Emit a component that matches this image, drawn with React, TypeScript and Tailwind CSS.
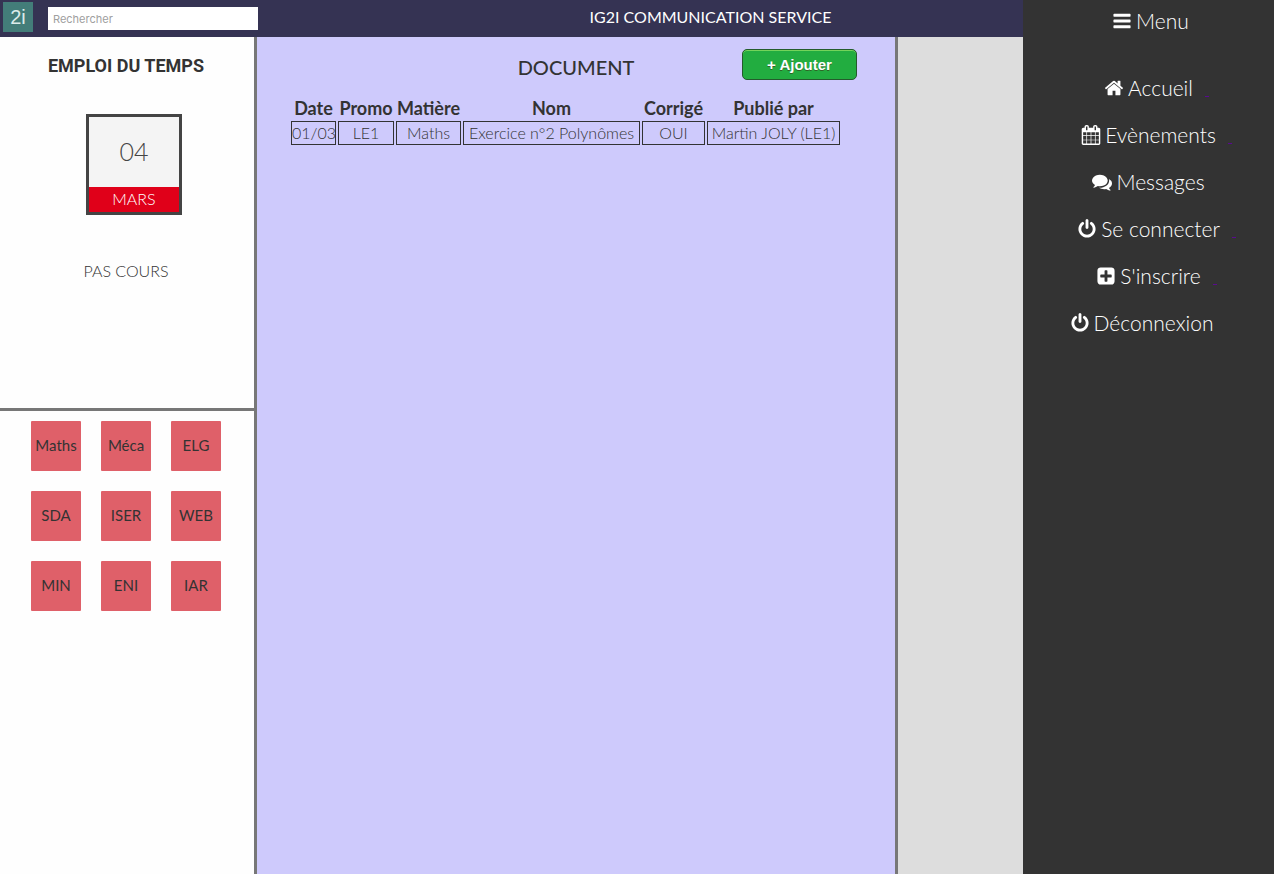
import React from "react";

const icons = {
  bars: "M1664 1344v128q0 26-19 45t-45 19h-1408q-26 0-45-19t-19-45v-128q0-26 19-45t45-19h1408q26 0 45 19t19 45zm0-512v128q0 26-19 45t-45 19h-1408q-26 0-45-19t-19-45v-128q0-26 19-45t45-19h1408q26 0 45 19t19 45zm0-512v128q0 26-19 45t-45 19h-1408q-26 0-45-19t-19-45v-128q0-26 19-45t45-19h1408q26 0 45 19t19 45z",
  home: "M1472 992v480q0 26-19 45t-45 19h-384v-384h-256v384h-384q-26 0-45-19t-19-45v-480q0-1 .5-3t.5-3l575-474 575 474q1 2 1 6zm223-69l-62 74q-8 9-21 11h-3q-13 0-21-7l-692-577-692 577q-12 8-24 7-13-2-21-11l-62-74q-8-10-7-23.5t11-21.5l719-599q32-26 76-26t76 26l244 204v-195q0-14 9-23t23-9h192q14 0 23 9t9 23v408l219 182q10 8 11 21.5t-7 23.5z",
  calendar:
    "M192 1664h288v-288h-288v288zm352 0h320v-288h-320v288zm-352-352h288v-320h-288v320zm352 0h320v-320h-320v320zm-352-384h288v-288h-288v288zm736 736h320v-288h-320v288zm-384-736h320v-288h-320v288zm768 736h288v-288h-288v288zm-384-352h320v-320h-320v320zm-352-864v-288q0-13-9.5-22.5t-22.5-9.5h-64q-13 0-22.5 9.5t-9.5 22.5v288q0 13 9.5 22.5t22.5 9.5h64q13 0 22.5-9.5t9.5-22.5zm736 864h288v-320h-288v320zm-384-384h320v-288h-320v288zm384 0h288v-288h-288v288zm32-480v-288q0-13-9.5-22.5t-22.5-9.5h-64q-13 0-22.5 9.5t-9.5 22.5v288q0 13 9.5 22.5t22.5 9.5h64q13 0 22.5-9.5t9.5-22.5zm384-64v1280q0 52-38 90t-90 38h-1408q-52 0-90-38t-38-90v-1280q0-52 38-90t90-38h128v-96q0-66 47-113t113-47h64q66 0 113 47t47 113v96h384v-96q0-66 47-113t113-47h64q66 0 113 47t47 113v96h128q52 0 90 38t38 90z",
  comments:
    "M1408 768q0 139-94 257t-256.5 186.5-353.5 68.5q-86 0-176-16-124 88-278 128-36 9-86 16h-3q-11 0-20.5-8t-11.5-21q-1-3-1-6.5t.5-6.5 2-6l2.5-5 3.5-5.5 4-5 4.5-5 4-4.5q5-6 23-25t26-29.5 22.5-29 25-38.5 20.5-44q-124-72-195-177t-71-224q0-139 94-257t256.5-186.5 353.5-68.5 353.5 68.5 256.5 186.5 94 257zm384 256q0 120-71 224.5t-195 176.5q10 24 20.5 44t25 38.5 22.5 29 26 29.5 23 25q1 1 4 4.5t4.5 5 4 5 3.5 5.5l2.5 5 2 6 .5 6.5-1 6.5q-3 14-13 22t-22 7q-50-7-86-16-154-40-278-128-90 16-176 16-271 0-472-132 58 4 88 4 161 0 309-45t264-129q125-92 192-212t67-254q0-77-23-152 129 71 204 178t75 230z",
  power:
    "M1664 896q0 156-61 298t-164 245-245 164-298 61-298-61-245-164-164-245-61-298q0-182 80.5-343t226.5-270q43-32 95.5-25t83.5 50q32 42 24.5 94.5t-49.5 84.5q-98 74-151.5 181t-53.5 228q0 104 40.5 198.5t109.5 163.5 163.5 109.5 198.5 40.5 198.5-40.5 163.5-109.5 109.5-163.5 40.5-198.5q0-121-53.5-228t-151.5-181q-42-32-49.5-84.5t24.5-94.5q31-43 84-50t95 25q146 109 226.5 270t80.5 343zm-640-768v640q0 52-38 90t-90 38-90-38-38-90v-640q0-52 38-90t90-38 90 38 38 90z",
  plus: "M1408 960v-128q0-26-19-45t-45-19h-320v-320q0-26-19-45t-45-19h-128q-26 0-45 19t-19 45v320h-320q-26 0-45 19t-19 45v128q0 26 19 45t45 19h320v320q0 26 19 45t45 19h128q26 0 45-19t19-45v-320h320q26 0 45-19t19-45zm256-544v960q0 119-84.5 203.5t-203.5 84.5h-960q-119 0-203.5-84.5t-84.5-203.5v-960q0-119 84.5-203.5t203.5-84.5h960q119 0 203.5 84.5t84.5 203.5z",
};

type IconName = keyof typeof icons;

function Icon({ name }: { name: IconName }) {
  return (
    <svg viewBox="0 0 1792 1792" className="size-5 shrink-0 fill-white" aria-hidden="true">
      <path d={icons[name]} />
    </svg>
  );
}

const links: { icon: IconName; label: string; mark?: boolean; shifted?: boolean }[] = [
  { icon: "home", label: "Accueil", mark: true },
  { icon: "calendar", label: "Evènements", mark: true },
  { icon: "comments", label: "Messages" },
  { icon: "power", label: "Se connecter", mark: true },
  { icon: "plus", label: "S'inscrire", mark: true },
  { icon: "power", label: "Déconnexion", shifted: true },
];

const subjects = ["Maths", "Méca", "ELG", "SDA", "ISER", "WEB", "MIN", "ENI", "IAR"];

const columns = [
  { title: "Date", value: "01/03", width: "w-[45px]" },
  { title: "Promo", value: "LE1", width: "w-[56px]" },
  { title: "Matière", value: "Maths", width: "w-[65px]" },
  { title: "Nom", value: "Exercice n°2 Polynômes", width: "w-[177px]" },
  { title: "Corrigé", value: "OUI", width: "w-[63px]" },
  { title: "Publié par", value: "Martin JOLY (LE1)", width: "w-[133px]" },
];

function TopBar() {
  return (
    <header className="flex h-[37px] items-start bg-[#353353]">
      <a
        href="#"
        className="mt-0.5 ml-[3px] flex size-[30px] shrink-0 items-center justify-center bg-[#437d79] font-['Liberation_Sans',sans-serif] text-xl text-[#dcebea]"
      >
        2i
      </a>
      <input
        type="text"
        aria-label="Rechercher"
        placeholder="Rechercher"
        className="mt-[7px] ml-[15px] h-[23px] w-[210px] shrink-0 bg-white px-[5px] pt-px font-[Inter,sans-serif] text-[11px] text-[#333] outline-none placeholder:text-[#a0a0a0]"
      />
      <p className="flex-1 pt-[5px] pl-[140px] text-center text-base leading-6 whitespace-nowrap text-white">
        IG2I COMMUNICATION SERVICE
      </p>
    </header>
  );
}

function Planning() {
  return (
    <aside className="flex w-[257px] shrink-0 flex-col border-r-3 border-[#777] bg-[#fefefe]">
      <section className="flex h-[374px] flex-col items-center border-b-3 border-[#777] pt-[17px] pr-0.5">
        <h2 className="font-[Roboto,sans-serif] text-lg leading-6 font-bold text-[#333]">EMPLOI DU TEMPS</h2>
        <div className="mt-9 ml-4 flex h-[101px] w-24 flex-col border-3 border-[#444] text-center font-light">
          <div className="flex h-[70px] items-center justify-center bg-[#f4f4f4] text-[25px] text-[#444]">04</div>
          <div className="flex-1 bg-[#e00019] text-base leading-6 text-white">MARS</div>
        </div>
        <p className="mt-11 text-base leading-6 font-light">PAS COURS</p>
      </section>
      <nav className="grid grid-cols-[repeat(3,50px)] gap-5 pt-2.5 pl-[31px]">
        {subjects.map((name) => (
          <a
            key={name}
            href="#"
            className="flex h-[50px] items-center justify-center rounded-[1px] bg-[#df6069] pb-0.5 text-[15px] text-[#333]"
          >
            {name}
          </a>
        ))}
      </nav>
    </aside>
  );
}

function Documents() {
  return (
    <main className="max-w-[641px] flex-1 border-r-3 border-[#777] bg-[#cecafc]">
      <div className="grid grid-cols-[1fr_auto_1fr] items-start pt-3">
        <h1 className="col-start-2 pt-1 text-xl leading-7 font-medium">DOCUMENT</h1>
        <button
          type="button"
          className="mr-[38px] h-[31px] w-[115px] justify-self-end rounded-[5px] border border-[#245b2c] bg-[#22ad40] pt-0.5 font-['Liberation_Sans',sans-serif] text-[15px] font-bold text-white shadow-[inset_0_1px_0_#74d45a] text-shadow-[0_1px_0_#2f6627]"
        >
          + Ajouter
        </button>
      </div>
      <table className="mt-3.5 ml-8 w-[553px] table-fixed border-separate border-spacing-x-[2px] border-spacing-y-[1px] text-center whitespace-nowrap">
        <thead>
          <tr>
            {columns.map((c) => (
              <th key={c.title} className={`${c.width} h-6 p-0 text-lg leading-6 font-bold`}>
                {c.title}
              </th>
            ))}
          </tr>
        </thead>
        <tbody>
          <tr>
            {columns.map((c) => (
              <td key={c.title} className="h-6 border border-[#333] p-0 text-base leading-[22px] font-light">
                {c.value}
              </td>
            ))}
          </tr>
        </tbody>
      </table>
    </main>
  );
}

function Menu() {
  return (
    <nav className="flex w-[251px] shrink-0 flex-col items-center bg-[#333] text-[21px] leading-7 font-light text-white">
      <button type="button" className="mt-[7px] ml-1 flex items-center gap-1">
        <Icon name="bars" />
        Menu
      </button>
      <ul className="mt-[39px] flex flex-col items-center gap-[19px]">
        {links.map((l) => (
          <li key={l.label} className={l.shifted ? "pr-3.5" : ""}>
            <a href="#" className="relative flex items-center gap-1 whitespace-nowrap">
              <Icon name={l.icon} />
              {l.label}
              {l.mark && <span className="absolute bottom-[5px] left-full ml-3 h-px w-1 bg-[#5a0a90]" />}
            </a>
          </li>
        ))}
      </ul>
    </nav>
  );
}

export default function App() {
  return (
    <div className="flex min-h-screen bg-[#ddd] font-[Lato,sans-serif] text-[#333]">
      <div className="flex min-w-0 flex-1 flex-col">
        <TopBar />
        <div className="flex flex-1">
          <Planning />
          <Documents />
        </div>
      </div>
      <Menu />
    </div>
  );
}
